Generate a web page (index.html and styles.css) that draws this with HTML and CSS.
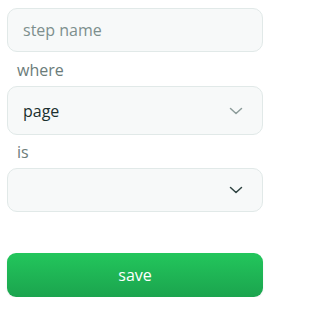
FILE: index.html
```html
<!DOCTYPE html>
<html>
<head>
<meta charset="utf-8">
<link rel="stylesheet" href="styles.css">
</head>
<body>
<form class="form">
  <div class="field field-input"><span class="placeholder">step name</span></div>
  <div class="label label-where">where</div>
  <div class="field field-select tall">
    <span class="value">page</span>
    <svg class="chev light" width="14" height="8" viewBox="0 0 14 8"><polyline points="1.5,1.5 7,6.5 12.5,1.5" fill="none" stroke="currentColor" stroke-width="1.5" stroke-linecap="round" stroke-linejoin="round"/></svg>
  </div>
  <div class="label label-is">is</div>
  <div class="field field-select">
    <span class="value"></span>
    <svg class="chev dark" width="14" height="8" viewBox="0 0 14 8"><polyline points="1.5,1.5 7,6.5 12.5,1.5" fill="none" stroke="currentColor" stroke-width="1.5" stroke-linecap="round" stroke-linejoin="round"/></svg>
  </div>
  <div class="btn">save</div>
</form>
</body>
</html>
```
FILE: styles.css
```css
html, body {
  margin: 0;
  padding: 0;
  background: #ffffff;
}
body {
  font-family: "Open Sans", "Noto Sans", sans-serif;
  font-size: 16px;
}
.form {
  display: flex;
  flex-direction: column;
  padding: 8px 7px 0 7px;
  width: 256px;
}
.field {
  box-sizing: border-box;
  height: 44px;
  background: #f7f9f9;
  border: 1px solid #e1e9e8;
  border-radius: 10px;
  display: flex;
  align-items: center;
  padding: 0 19px 0 15px;
}
.field.tall {
  height: 49px;
}
.field-select {
  justify-content: space-between;
}
.placeholder {
  color: #7d8f8d;
}
.value {
  color: #1b302e;
}
.label {
  color: #6b7c7a;
  line-height: 24px;
  padding-left: 10px;
}
.label-where {
  margin: 6px 0 4px;
}
.label-is {
  margin: 5px 0 4px;
}
.chev {
  display: block;
}
.chev.light {
  color: #8c9c9a;
}
.chev.dark {
  color: #2e4341;
}
.btn {
  margin-top: 41px;
  height: 44px;
  border-radius: 9px;
  background: linear-gradient(180deg, #23c65c 0%, #1ba44e 100%);
  color: #ffffff;
  display: flex;
  align-items: center;
  justify-content: center;
  font-weight: 500;
  box-shadow: 0 1px 2px rgba(0,0,0,0.08);
}
```
